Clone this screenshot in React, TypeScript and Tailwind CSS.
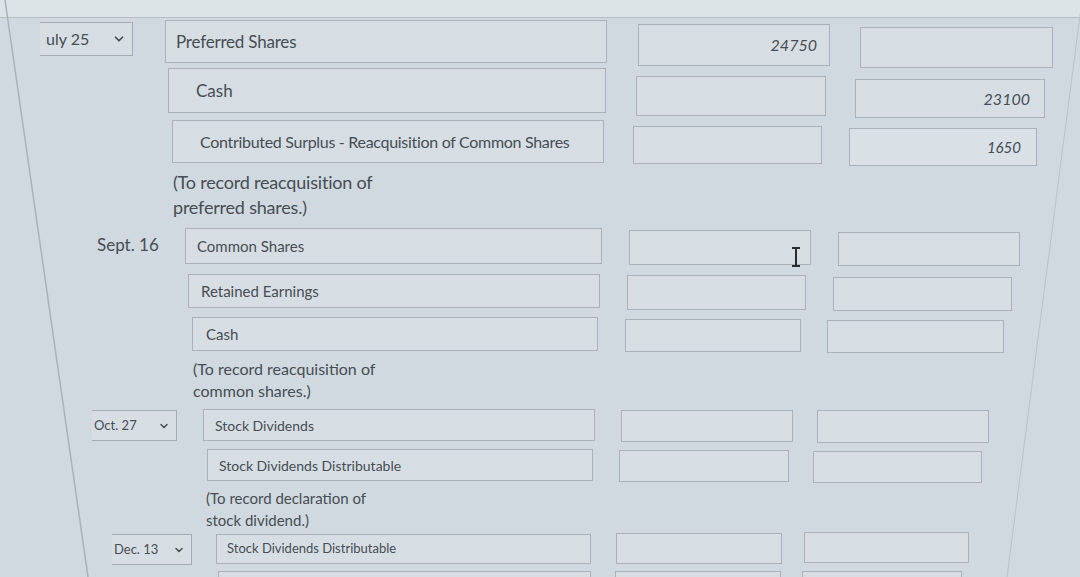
import { ChevronDown } from 'lucide-react'

const font = { fontFamily: 'Lato, "Open Sans", sans-serif' }

function Box({ className, children }: { className: string; children?: React.ReactNode }) {
  return (
    <div className={`flex shrink-0 items-center border border-[#a9b2b8] bg-[#d6dee3] ${className}`}>
      {children}
    </div>
  )
}

export default function App() {
  return (
    <div className="relative h-[577px] w-[1080px] overflow-hidden bg-[#cfd9df] text-[#474d53]" style={font}>
      {/* header strip */}
      <div className="h-[18px] border-b border-[#b5bec4] bg-[#dde4e8]" />

      <div className="flex flex-col">
        {/* July 25 */}
        <div className="mt-[2px] flex h-[48px] items-start">
          <div className="w-[165px] shrink-0">
            <div className="ml-[40px] mt-[2px] flex h-[34px] w-[93px] items-center justify-between border-y border-r border-[#a3acb2] bg-[#d6dee3] pl-[6px] pr-[6px] text-[16px]">
              <span>uly 25</span>
              <ChevronDown size={14} strokeWidth={3} />
            </div>
          </div>
          <Box className="h-[43px] w-[442px] pl-[10px] text-[17px] tracking-[-0.2px]">Preferred Shares</Box>
          <Box className="ml-[31px] mt-[4px] h-[42px] w-[192px] justify-end pr-[12px] text-[16px] italic">24750</Box>
          <Box className="ml-[30px] mt-[7px] h-[41px] w-[193px]" />
        </div>

        <div className="flex h-[52px] items-start">
          <div className="w-[168px] shrink-0" />
          <Box className="h-[45px] w-[438px] pl-[27px] text-[17px]">Cash</Box>
          <Box className="ml-[30px] mt-[8px] h-[40px] w-[190px]" />
          <Box className="ml-[29px] mt-[11px] h-[39px] w-[190px] justify-end pr-[14px] text-[16px] italic">23100</Box>
        </div>

        <div className="flex h-[50px] items-start">
          <div className="w-[172px] shrink-0" />
          <Box className="h-[43px] w-[432px] pl-[27px] text-[16px] tracking-[-0.3px]">Contributed Surplus - Reacquisition of Common Shares</Box>
          <Box className="ml-[29px] mt-[6px] h-[38px] w-[189px]" />
          <Box className="ml-[27px] mt-[8px] h-[38px] w-[188px] justify-end border-[#6f9fd6] bg-[#d9e1e6] pr-[15px] text-[15px] italic">1650</Box>
        </div>

        <div className="ml-[173px] h-[58px] text-[18px] leading-[25px] tracking-[-0.2px]">
          <p>(To record reacquisition of</p>
          <p>preferred shares.)</p>
        </div>

        {/* Sept. 16 */}
        <div className="flex h-[46px] items-start">
          <div className="flex h-[34px] w-[185px] shrink-0 items-center pl-[97px] text-[17px]">Sept. 16</div>
          <Box className="h-[36px] w-[417px] pl-[11px] text-[15px]">Common Shares</Box>
          <Box className="relative ml-[27px] mt-[2px] h-[35px] w-[182px]">
            <svg className="absolute left-[160px] top-[16px]" width="12" height="20" viewBox="0 0 12 20">
              <path d="M2 1h8M6 1v18M2 19h8" stroke="#2a2d30" strokeWidth="2" fill="none" />
            </svg>
          </Box>
          <Box className="ml-[27px] mt-[4px] h-[34px] w-[182px]" />
        </div>

        <div className="flex h-[43px] items-start">
          <div className="w-[188px] shrink-0" />
          <Box className="h-[34px] w-[412px] pl-[12px] text-[15px]">Retained Earnings</Box>
          <Box className="ml-[27px] mt-[1px] h-[35px] w-[179px]" />
          <Box className="ml-[27px] mt-[3px] h-[34px] w-[179px]" />
        </div>

        <div className="flex h-[41px] items-start">
          <div className="w-[192px] shrink-0" />
          <Box className="h-[34px] w-[406px] pl-[13px] text-[15px]">Cash</Box>
          <Box className="ml-[27px] mt-[2px] h-[33px] w-[176px]" />
          <Box className="ml-[26px] mt-[3px] h-[33px] w-[177px]" />
        </div>

        <div className="ml-[193px] h-[51px] text-[16px] leading-[22px]">
          <p>(To record reacquisition of</p>
          <p>common shares.)</p>
        </div>

        {/* Oct. 27 */}
        <div className="flex h-[40px] items-start">
          <div className="w-[203px] shrink-0">
            <div className="ml-[92px] mt-[1px] flex h-[31px] w-[85px] items-center justify-between border-y border-r border-[#a3acb2] bg-[#d6dee3] pl-[2px] pr-[6px] text-[13px]">
              <span>Oct. 27</span>
              <ChevronDown size={12} strokeWidth={3} />
            </div>
          </div>
          <Box className="h-[32px] w-[392px] pl-[11px] text-[14px]">Stock Dividends</Box>
          <Box className="ml-[26px] mt-[1px] h-[32px] w-[172px]" />
          <Box className="ml-[24px] mt-[1px] h-[33px] w-[172px]" />
        </div>

        <div className="flex h-[38px] items-start">
          <div className="w-[207px] shrink-0" />
          <Box className="h-[32px] w-[386px] pl-[11px] text-[14px]">Stock Dividends Distributable</Box>
          <Box className="ml-[26px] mt-[1px] h-[32px] w-[170px]" />
          <Box className="ml-[24px] mt-[2px] h-[32px] w-[169px]" />
        </div>

        <div className="ml-[206px] h-[45px] text-[15px] leading-[22px]">
          <p>(To record declaration of</p>
          <p>stock dividend.)</p>
        </div>

        {/* Dec. 13 */}
        <div className="flex h-[39px] items-start">
          <div className="w-[216px] shrink-0">
            <div className="ml-[112px] mt-[2px] flex h-[31px] w-[80px] items-center justify-between border-y border-r border-[#a3acb2] bg-[#d6dee3] pl-[2px] pr-[6px] text-[13px]">
              <span>Dec. 13</span>
              <ChevronDown size={12} strokeWidth={3} />
            </div>
          </div>
          <Box className="mt-[2px] h-[30px] w-[375px] pl-[10px] text-[13px]">Stock Dividends Distributable</Box>
          <Box className="ml-[25px] mt-[1px] h-[31px] w-[166px]" />
          <Box className="ml-[22px] h-[31px] w-[165px]" />
        </div>

        <div className="flex h-[30px] items-start">
          <div className="w-[218px] shrink-0" />
          <Box className="h-[30px] w-[373px]" />
          <Box className="ml-[24px] h-[30px] w-[166px]" />
          <Box className="ml-[21px] h-[30px] w-[160px]" />
        </div>
      </div>

      {/* panel edges of the photographed screen */}
      <svg className="pointer-events-none absolute inset-0" width="1080" height="577">
        <line x1="5" y1="0" x2="88" y2="577" stroke="#a7b3ba" strokeWidth="1.5" />
        <line x1="1082" y1="0" x2="1007" y2="577" stroke="#b9c3c9" strokeWidth="1" />
      </svg>
    </div>
  )
}
